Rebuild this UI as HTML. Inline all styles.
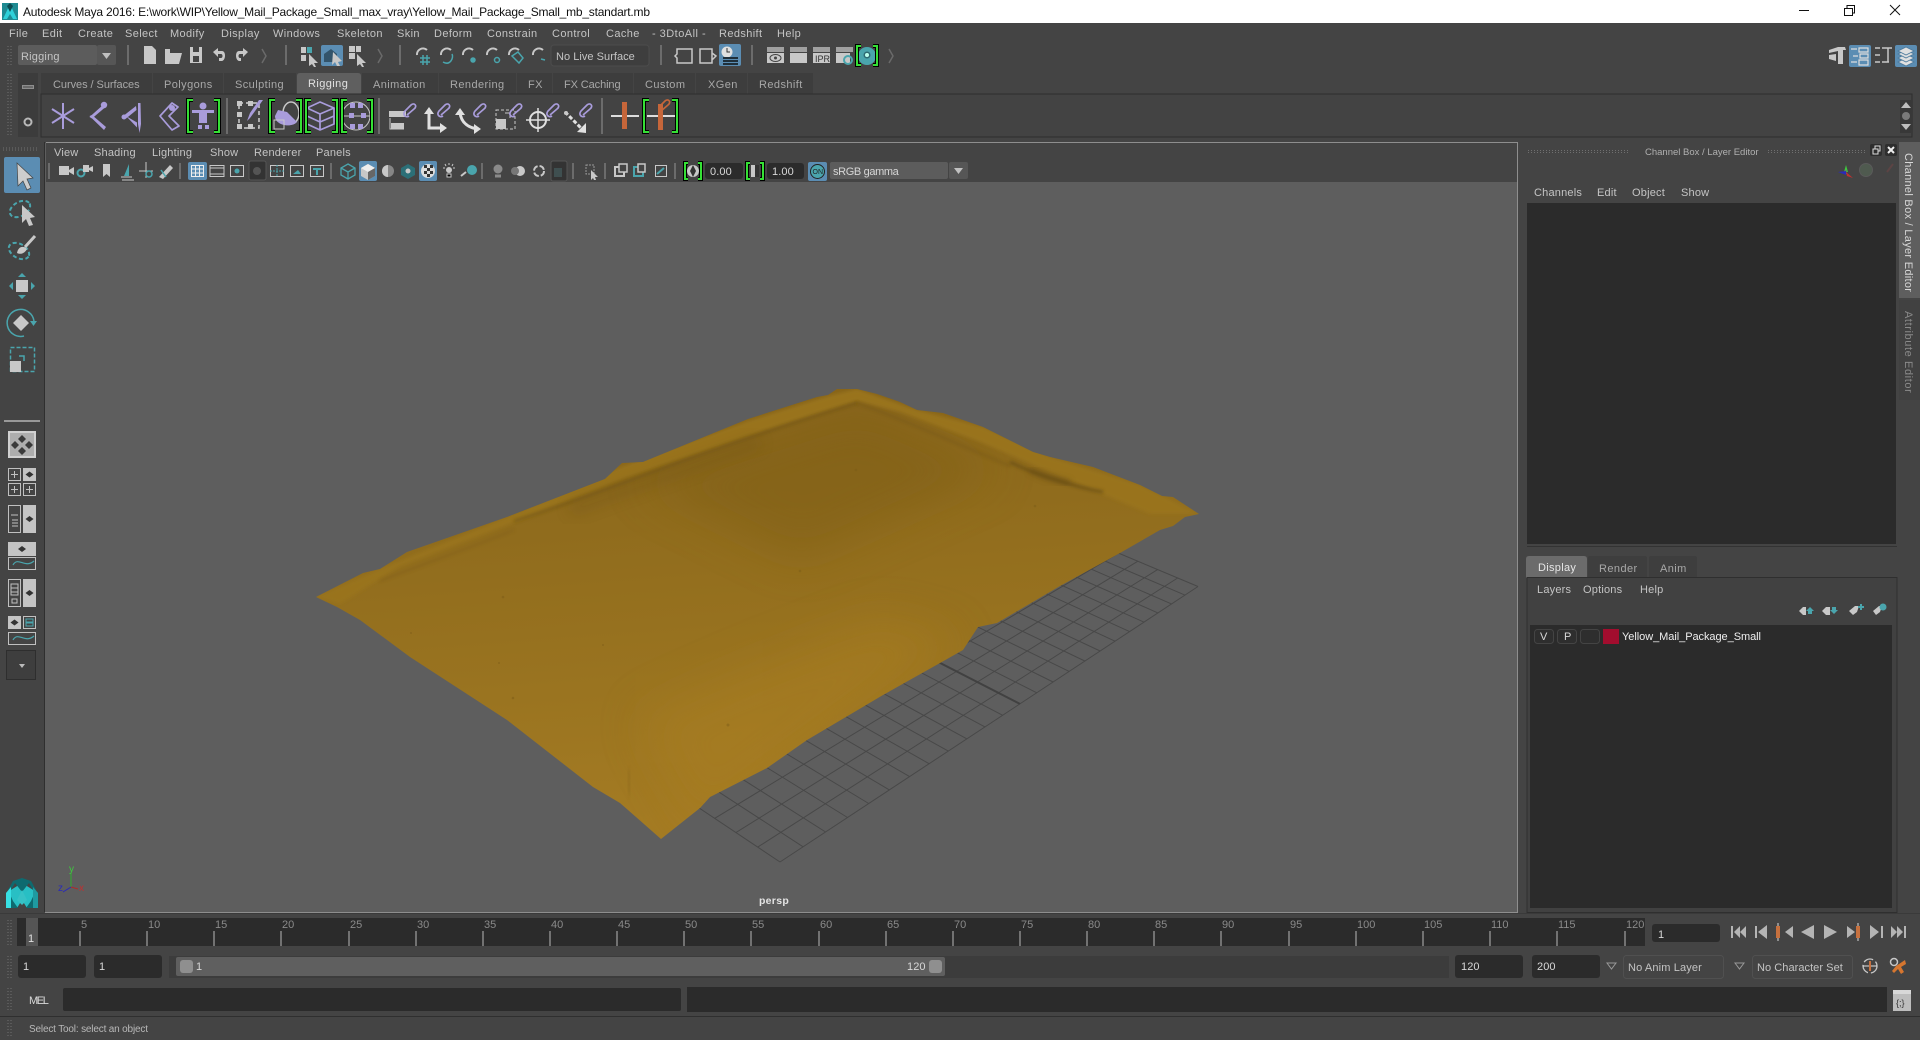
<!DOCTYPE html>
<html><head><meta charset="utf-8"><title>Autodesk Maya 2016</title>
<style>
html,body{margin:0;padding:0;background:#444;width:1920px;height:1040px;overflow:hidden}
svg{display:block;font-family:"Liberation Sans",sans-serif}
.m{font-size:11px;fill:#c4c4c4;letter-spacing:.2px}
.mm{font-size:11px;fill:#c4c4c4;letter-spacing:.38px}
.t{font-size:11px;fill:#a8a8a8;letter-spacing:.42px}
.l{font-size:11px;fill:#8a8a8a}
.w{font-size:11px;fill:#d8d8d8;letter-spacing:.1px}
.c{fill:#4aa5ad}
.g{fill:#c8c8c8}
.p{fill:#a99cdb}
.sp{fill:none;stroke:#a99cdb;stroke-width:2}
.sg{fill:none;stroke:#c8c8c8;stroke-width:2}
.sc{fill:none;stroke:#4aa5ad;stroke-width:2}
.sep{stroke:#6c6c6c;stroke-width:2}
.dots{stroke:#6f6f6f;stroke-width:1;stroke-dasharray:1 2;fill:none}
.bk{fill:none;stroke:#000;stroke-width:4}
.gb{fill:none;stroke:#35e035;stroke-width:2}
.a{fill:#5b8db3}
.in{fill:#2b2b2b}
</style></head><body>
<svg width="1920" height="1040" viewBox="0 0 1920 1040" xmlns="http://www.w3.org/2000/svg">
<defs>
<linearGradient id="pk" x1="0" y1="0" x2="0.15" y2="1"><stop offset="0" stop-color="#86631b"/><stop offset=".35" stop-color="#906c1d"/><stop offset=".7" stop-color="#9a7420"/><stop offset="1" stop-color="#a47b23"/></linearGradient>
<filter id="b1" x="-20%" y="-20%" width="140%" height="140%"><feGaussianBlur stdDeviation="1.500"/></filter>
<filter id="b3" x="-20%" y="-20%" width="140%" height="140%"><feGaussianBlur stdDeviation="3"/></filter>
<filter id="b6" x="-20%" y="-20%" width="140%" height="140%"><feGaussianBlur stdDeviation="7"/></filter>
<filter id="b20" x="-30%" y="-30%" width="160%" height="160%"><feGaussianBlur stdDeviation="22"/></filter>
<clipPath id="pc"><path d="M316 597L363 573L380 569L407 552L507 517L605 479L622 463L643 462L748 419L817 397L828 395L837 389L857 389L877 394L900 402L917 410L943 413L983 427L1033 452L1050 457L1093 467L1140 485L1162 496L1173 497L1199 514L1185 517L1173 526L1160 530L1120 553L1060 586L997 623L978 627L963 650L940 663L883 695L807 740L767 768L710 797L700 808L661 839L620 803L593 787L507 720L410 657L360 620L337 607Z"/></clipPath>
</defs>

<!-- base -->
<rect width="1920" height="1040" fill="#444"/>
<!-- title bar -->
<rect width="1920" height="23" fill="#fff"/>
<g transform="translate(2,3)"><rect width="16" height="17" fill="#1f8a92"/><path d="M1 16L8 1L15 16L11 16L8 11L5 16Z" fill="#2fd0d8"/><path d="M5 3L8 0L11 3L8 9Z" fill="#0d4a50"/></g>
<text x="23" y="16" font-size="12" fill="#111" textLength="627" lengthAdjust="spacing">Autodesk Maya 2016: E:\work\WIP\Yellow_Mail_Package_Small_max_vray\Yellow_Mail_Package_Small_mb_standart.mb</text>
<path d="M1799 10.5H1809" stroke="#111" stroke-width="1"/>
<path d="M1844.5 8.5H1852.5V15.5H1844.5ZM1847 8V5.5H1854.5V13H1852.5" fill="none" stroke="#111" stroke-width="1"/>
<path d="M1890 5L1900 15M1900 5L1890 15" stroke="#111" stroke-width="1"/>

<!-- menu -->
<g>
<text class="mm" x="9" y="37">File</text><text class="mm" x="42" y="37">Edit</text><text class="mm" x="78" y="37">Create</text><text class="mm" x="125" y="37">Select</text><text class="mm" x="170" y="37">Modify</text><text class="mm" x="221" y="37">Display</text><text class="mm" x="273" y="37">Windows</text><text class="mm" x="337" y="37">Skeleton</text><text class="mm" x="397" y="37">Skin</text><text class="mm" x="434" y="37">Deform</text><text class="mm" x="487" y="37">Constrain</text><text class="mm" x="552" y="37">Control</text><text class="mm" x="606" y="37">Cache</text><text class="mm" x="652" y="37" textLength="54">- 3DtoAll -</text><text class="mm" x="719" y="37">Redshift</text><text class="mm" x="777" y="37">Help</text>
</g>

<!-- status toolbar -->
<path class="dots" d="M8 46V66M11 46V66M8 74V136M11 74V136"/>
<rect x="18" y="45" width="79" height="20" rx="2" fill="#5c5c5c"/><rect x="97" y="45" width="19" height="20" rx="2" fill="#565656"/>
<path d="M102 53H111L106.500 59Z" fill="#c0c0c0"/>
<text class="m" x="21" y="60">Rigging</text>
<path class="sep" d="M128 45V65M286 45V65M400 45V65M661 45V65M752 45V65"/>
<!-- new open save undo redo -->
<path d="M144 46H152L156 50V64H144Z" class="g"/>
<path d="M165 51V64H179L182 53H170V49H165Z" class="g"/>
<path d="M190 47H202V63H190Z" class="g"/><rect x="193" y="47" width="6" height="5" fill="#444"/><rect x="193" y="56" width="6" height="6" fill="#444"/>
<path d="M213 52L218 48V51H222C226 51 226 60 222 61H219V58H221C223 58 223 54 221 54H218V57Z" class="g"/>
<path d="M248 52L243 48V51H239C235 51 235 60 239 61H241V58H240C238 58 238 54 240 54H243V57Z" class="g"/>
<path d="M262 49L266 56L262 63" fill="none" stroke="#6a6a6a" stroke-width="1.500"/>
<path d="M378 49L382 56L378 63" fill="none" stroke="#6a6a6a" stroke-width="1.500"/>
<path d="M889 49L893 56L889 63" fill="none" stroke="#6a6a6a" stroke-width="1.500"/>
<!-- selection mask -->
<rect x="321" y="45" width="22" height="21" rx="2" class="a"/>
<g class="g"><rect x="301" y="47" width="5" height="6"/><rect x="301" y="55" width="5" height="6"/><rect x="307" y="47" width="5" height="6" fill="#4aa5ad"/><path d="M309 54L318 63L314 63L316 67L314 67L312 64L309 66Z"/>
<path d="M324 54L331 49L337 54V62H324Z" fill="#33546b"/><path d="M333 52L342 61L338 62L340 66L337 66L335 62L332 65Z"/>
<rect x="349" y="46" width="6" height="6"/><rect x="356" y="46" width="5" height="6"/><rect x="349" y="53" width="6" height="6"/><path d="M357 54L366 63L362 63L364 67L362 67L360 64L357 66Z"/></g>
<!-- snaps -->
<g fill="none" stroke="#c8c8c8" stroke-width="2">
<path d="M417 55A6 6 0 0 1 427 50"/><path d="M441 55A6 6 0 0 1 451 50"/><path d="M463 55A6 6 0 0 1 473 50"/><path d="M487 55A6 6 0 0 1 497 50"/><path d="M509 55A6 6 0 0 1 519 50"/><path d="M533 55A6 6 0 0 1 543 50"/>
</g>
<g fill="none" stroke="#4aa5ad" stroke-width="1.500">
<path d="M420 58H430M420 62H430M423 55V65M427 55V65"/><path d="M443 62C450 66 454 58 452 54"/><circle cx="473" cy="60" r="2" fill="#4aa5ad"/><circle cx="497" cy="60" r="2.500"/><path d="M512 56L519 63L523 58L518 52Z"/><path d="M541 59L545 60"/>
</g>
<rect x="551" y="45" width="98" height="21" rx="3" fill="#3e3e3e" stroke="#4c4c4c"/>
<text class="m" x="556" y="60" textLength="79">No Live Surface</text>
<!-- live/construct -->
<path d="M677 49H692V63H677V58L675 56L677 54Z" fill="none" stroke="#c8c8c8" stroke-width="1.500"/>
<path d="M700 49H712V63H700Z M712 53L716 56L712 60" fill="none" stroke="#c8c8c8" stroke-width="1.500"/>
<rect x="719" y="44" width="22" height="22" rx="2" class="a"/>
<circle cx="727" cy="52" r="5.500" fill="#e0e0e0"/><path d="M727 48V52H730" stroke="#333" fill="none"/>
<path d="M723 58H738M723 61H738M723 64H738" stroke="#1f2f3a" stroke-width="2"/>
<!-- render -->
<g class="g"><rect x="767" y="47" width="17" height="5" opacity=".7"/><rect x="767" y="53" width="17" height="10"/><rect x="790" y="47" width="17" height="5" opacity=".7"/><rect x="790" y="53" width="17" height="10"/><rect x="813" y="47" width="17" height="5" opacity=".7"/><rect x="813" y="53" width="17" height="10"/><rect x="836" y="47" width="17" height="5" opacity=".7"/><rect x="836" y="53" width="14" height="10"/></g>
<ellipse cx="775.500" cy="58" rx="5.500" ry="3.500" fill="none" stroke="#444"/><circle cx="775.500" cy="58" r="1.500" fill="#444"/>
<text x="815" y="62" font-size="9" fill="#333">IPR</text>
<circle cx="848" cy="60" r="4" fill="none" stroke="#4aa5ad" stroke-width="2"/>
<circle cx="867" cy="56" r="9" class="c"/><circle cx="867" cy="55" r="3.500" fill="#2e6b72"/><circle cx="867" cy="55" r="2" fill="#bfe"/>
<path class="bk" d="M861 46H857V65H861M873 46H877V65H873"/><path class="gb" d="M861 46H857V65H861M873 46H877V65H873"/>

<!-- top-right mode icons -->
<g class="g"><path d="M1829 50L1838 47H1845L1846 50H1843V64H1838V51L1829 53ZM1829 55L1836 54V61L1829 59Z"/></g>
<rect x="1849" y="45" width="22" height="22" rx="2" class="a"/>
<g fill="none" stroke="#ddd" stroke-width="1.200"><path d="M1851 49H1857M1859 48H1868V52H1859ZM1853 56H1858M1860 54H1868V58H1860ZM1851 62H1857M1859 60H1868V65H1859Z"/></g>
<g fill="none" stroke="#c8c8c8" stroke-width="1.500"><path d="M1875 48H1880M1875 55H1880M1875 62H1880M1882 48H1892M1888 48V62M1882 62H1889"/></g>
<rect x="1895" y="45" width="22" height="22" rx="2" class="a"/>
<g fill="#e0e0e0" stroke="#4d7a9c" stroke-width=".8"><path d="M1906 58L1914 62L1906 66L1898 62Z"/><path d="M1906 54L1914 58L1906 62L1898 58Z"/><path d="M1906 50L1914 54L1906 58L1898 54Z"/><path d="M1906 47L1914 51L1906 55L1898 51Z"/></g>

<!-- tabs -->
<rect x="18" y="73" width="20" height="64" fill="#3c3c3c"/>
<rect x="22" y="85" width="12" height="4" fill="#b0b0b0" opacity=".7"/><path d="M23 87H33" stroke="#444" stroke-width="1"/>
<circle cx="28" cy="122" r="3.500" fill="none" stroke="#b8b8b8" stroke-width="2"/>
<g fill="#3d3d3d">
<rect x="41" y="73" width="111" height="21"/><rect x="153" y="73" width="70" height="21"/><rect x="224" y="73" width="72" height="21"/><rect x="362" y="73" width="76" height="21"/><rect x="439" y="73" width="77" height="21"/><rect x="517" y="73" width="35" height="21"/><rect x="553" y="73" width="80" height="21"/><rect x="634" y="73" width="61" height="21"/><rect x="696" y="73" width="51" height="21"/><rect x="748" y="73" width="65" height="21"/>
</g>
<path d="M297 94V76Q297 73 300 73H358Q361 73 361 76V94Z" fill="#5f5f5f"/>
<rect x="41" y="94" width="1871" height="43" fill="#434343" stroke="#2e2e2e"/>
<text class="t" x="53" y="88" textLength="87">Curves / Surfaces</text><text class="t" x="164" y="88">Polygons</text><text class="t" x="235" y="88">Sculpting</text><text class="t" x="308" y="87" style="fill:#e2e2e2">Rigging</text><text class="t" x="373" y="88">Animation</text><text class="t" x="450" y="88">Rendering</text><text class="t" x="528" y="88">FX</text><text class="t" x="564" y="88" textLength="57">FX Caching</text><text class="t" x="645" y="88">Custom</text><text class="t" x="708" y="88">XGen</text><text class="t" x="759" y="88">Redshift</text>

<!-- shelf icons -->
<g class="sp" style="stroke-width:2"><path d="M63 103V129M52 109L74 123M74 109L52 123"/></g>
<g class="p"><circle cx="104" cy="105" r="3.200"/><path d="M103 105L89.500 117L92 118.500L105 107.500Z"/><path d="M89.500 116L104 130L106 127L92 115Z"/></g>
<path class="p" d="M138 103H140.500L141 124L139.500 133L138 124Z"/><path class="p" d="M136 106L124.500 115L126 118.500L136.500 110Z"/><path class="p" d="M126 116L137 127.500L137 122.500Z"/><circle class="p" cx="124" cy="117" r="2.500"/>
<g fill="none" stroke="#a99cdb" stroke-width="1.700"><path d="M172 103L160 116L172 130L179 126L169 116L178 107Z" stroke-linejoin="round"/></g><circle class="p" cx="172" cy="108" r="3"/>
<!-- HIK -->
<g class="p"><circle cx="203" cy="106" r="3.500"/><path d="M192 110H214V113H207V123H199V113H192Z"/><rect x="198" y="125" width="4" height="4"/><rect x="205" y="125" width="4" height="4"/></g>
<path class="bk" d="M193 100H188V132H193M214 100H219V132H214"/><path class="gb" d="M193 100H188V132H193M214 100H219V132H214"/>
<!-- -->
<path class="sep" d="M227 98V134M379 98V134M602 98V134" stroke="#777"/>
<g fill="none" stroke="#cfcfcf" stroke-width="1.500" stroke-dasharray="4 3"><rect x="239" y="103" width="20" height="25"/></g><g class="g"><rect x="237" y="101" width="5" height="5"/><rect x="237" y="112" width="5" height="5"/><rect x="237" y="124" width="5" height="5"/><rect x="248" y="101" width="5" height="5"/><rect x="248" y="124" width="5" height="5"/></g><path d="M263 100L250 118L247 121L250 113L259 100Z" class="p"/>
<ellipse cx="291" cy="113" rx="8" ry="11" fill="none" stroke="#c8c8c8" stroke-width="1.500"/><path d="M275 116C275 126 292 128 297 122L287 112L278 110Z" class="p"/><rect x="274" y="120" width="10" height="9" fill="none" stroke="#c8c8c8"/>
<path class="bk" d="M275 100H270V132H275M296 100H301V132H296"/><path class="gb" d="M275 100H270V132H275M296 100H301V132H296"/>
<g fill="none" stroke="#a99cdb" stroke-width="1.700"><path d="M320 102L334 108V124L320 130L307 124V108ZM307 108L320 114L334 108M320 114V130M307 116L320 122L334 116"/></g>
<path class="bk" d="M311 100H306V132H311M332 100H337V132H332"/><path class="gb" d="M311 100H306V132H311M332 100H337V132H332"/>
<g fill="none" stroke="#c8c8c8" stroke-width="1"><circle cx="356" cy="116" r="14"/><path d="M342 116H370"/></g><g class="p"><rect x="350" y="103" width="5" height="5"/><rect x="358" y="103" width="5" height="5"/><rect x="349" y="113" width="5" height="5"/><rect x="361" y="113" width="5" height="5"/><rect x="350" y="124" width="5" height="5"/><rect x="358" y="124" width="5" height="5"/></g>
<path class="bk" d="M347 100H342V132H347M367 100H372V132H367"/><path class="gb" d="M347 100H342V132H347M367 100H372V132H367"/>
<!-- constraints -->
<g class="g"><rect x="389" y="111" width="17" height="6"/><rect x="391" y="123" width="13" height="6"/></g>
<path d="M390 118V129H404" fill="none" stroke="#c8c8c8"/>
<path d="M429 111V128H443" fill="none" stroke="#e0e0e0" stroke-width="3"/><path d="M429 107L424 114H434ZM447 128L440 123V133Z" fill="#e0e0e0"/>
<path d="M460 112C461 124 470 128 478 129" fill="none" stroke="#e0e0e0" stroke-width="3"/><path d="M460 108L455 115H465ZM481 129L474 124V134Z" fill="#e0e0e0"/>
<rect x="496" y="110" width="19" height="19" fill="none" stroke="#c8c8c8" stroke-dasharray="3 2"/><rect x="496" y="119" width="10" height="10" class="g"/><path d="M505 113H510V118" fill="none" stroke="#c8c8c8"/>
<circle cx="538" cy="120" r="8" fill="none" stroke="#e0e0e0" stroke-width="2"/><path d="M538 108V132M526 120H550" stroke="#e0e0e0" stroke-width="1.500"/>
<path d="M565 112L582 129" stroke="#e0e0e0" stroke-width="3" stroke-dasharray="4 2"/><path d="M577 132L586 123V133Z" fill="#e0e0e0"/><circle cx="566" cy="113" r="2" class="g"/>
<g fill="none" stroke="#a99cdb" stroke-width="1.700" transform="translate(0,7)">
<path d="M407 108L414 102C418 99 414 95 411 98L405 104C402 108 406 111 409 109"/>
<path d="M441 108L448 102C452 99 448 95 445 98L439 104C436 108 440 111 443 109"/>
<path d="M477 108L484 102C488 99 484 95 481 98L475 104C472 108 476 111 479 109"/>
<path d="M513 108L520 102C524 99 520 95 517 98L511 104C508 108 512 111 515 109"/>
<path d="M550 108L557 102C561 99 557 95 554 98L548 104C545 108 549 111 552 109"/>
<path d="M583 108L590 102C594 99 590 95 587 98L581 104C578 108 582 111 585 109"/>
</g>
<path d="M611 116H639" stroke="#ddd" stroke-width="2"/><rect x="622" y="102" width="5" height="27" fill="#c6663a"/>
<path d="M647 116H675" stroke="#ddd" stroke-width="2"/><rect x="658" y="104" width="5" height="26" fill="#c6663a"/>
<path d="M661 111L668 105C672 102 668 98 665 101L659 107" fill="none" stroke="#c6663a" stroke-width="1.700"/>
<path class="bk" d="M649 100H644V132H649M672 100H677V132H672"/><path class="gb" d="M649 100H644V132H649M672 100H677V132H672"/>
<rect x="1900" y="100" width="12" height="33" fill="#383838"/><path d="M1906 102L1911 108H1901ZM1906 130L1911 124H1901Z" fill="#bdbdbd"/><circle cx="1906" cy="116" r="4" fill="#7a7a7a"/>

<path d="M3 148H38" stroke="#6f6f6f" stroke-dasharray="1 2"/><path d="M3 150H38" stroke="#6f6f6f" stroke-dasharray="1 2"/>
<path d="M46 142.500H1517.500V912.500H45.500V142.500" fill="none" stroke="#8e8e8e"/>

<!-- viewport -->
<rect x="46" y="182" width="1471" height="730" fill="#5e5e5e"/>

<!-- grid -->
<g stroke="#454545" stroke-width="1" fill="none" opacity=".85">
<path d="M780 862L1198 586.500M757.700 847.100L1177.600 578M735.900 832.600L1157.600 569.600M714.600 818.400L1137.900 561.200M693.900 804.600L1118.600 553.100M673.600 791.100L1099.500 545.100M653.800 777.900L1080.800 537.300M634.500 764.900L1062.500 529.600"/>
<path d="M780 862L478.500 660.700M803.100 846.800L501.100 650.400M825.600 832L523.500 640.200M847.500 817.500L545.400 630.400M868.700 803.500L566.800 620.800M889.400 789.900L587.700 611.300M909.600 776.600L608.200 602.100M929.100 763.700L628.100 593.100M948.300 751.100L647.700 584.300M966.800 738.800L666.800 575.700M985 726.900L685.500 567.300M1002.700 715.300L703.800 559M1036.800 692.800L739.300 543M1053.100 682L756.400 535.200M1069.200 671.400L773.200 527.600M1084.800 661L789.800 520.200M1100.100 651L805.900 512.900M1115.100 641.200L821.800 505.800M1129.600 631.600L837.200 498.800M1143.900 622.100L852.500 491.900M1157.900 612.900L867.400 485.200M1171.500 603.900L882 478.600M1184.900 595.100L896.500 472.100M1198 586.500L910.500 465.800"/>
<path d="M1019.900 703.900L721.700 550.900" stroke="#3c3c3c" stroke-width="2"/>
</g>

<!-- package -->
<path d="M316 597L363 573L380 569L407 552L507 517L605 479L622 463L643 462L748 419L817 397L828 395L837 389L857 389L877 394L900 402L917 410L943 413L983 427L1033 452L1050 457L1093 467L1140 485L1162 496L1173 497L1199 514L1185 517L1173 526L1160 530L1120 553L1060 586L997 623L978 627L963 650L940 663L883 695L807 740L767 768L710 797L700 808L661 839L620 803L593 787L507 720L410 657L360 620L337 607Z" fill="url(#pk)"/>
<g clip-path="url(#pc)">
<path d="M640 720C720 680 800 650 880 620L960 640L700 830Z" fill="#a87e24" filter="url(#b20)" opacity=".55"/>
<path d="M640 480L860 410L1000 470L800 560Z" fill="#7f5e19" filter="url(#b20)" opacity=".5"/>
<path d="M316 597L380 569L507 517L622 467L748 421L828 396L857 389L917 410L983 427L1050 457L1140 485L1199 514L1150 514L1050 472L980 442L900 412L857 401L760 432L620 480L505 526L400 566L340 604Z" fill="#99731f" filter="url(#b1)"/>
<path d="M514 521C570 503 620 484 680 462C730 444 800 420 857 403" fill="none" stroke="#6e5216" stroke-width="2" filter="url(#b1)" opacity=".75"/>
<path d="M570 510C630 488 690 466 760 442" fill="none" stroke="#705317" stroke-width="10" filter="url(#b6)" opacity=".4"/>
<path d="M857 403C900 418 960 445 1010 466" fill="none" stroke="#705317" stroke-width="2" filter="url(#b1)" opacity=".45"/>
<path d="M1010 462C1030 472 1070 486 1103 492" fill="none" stroke="#654b13" stroke-width="3" filter="url(#b1)" opacity=".7"/>
<path d="M1030 470C1045 477 1055 480 1070 483" fill="none" stroke="#654b13" stroke-width="6" filter="url(#b3)" opacity=".5"/>
<path d="M380 581C420 565 470 548 514 530" fill="none" stroke="#79591a" stroke-width="2" filter="url(#b1)" opacity=".4"/>
<path d="M630 795L628 770" stroke="#7f5f1c" stroke-width="6" filter="url(#b3)" opacity=".25"/>
<g fill="#7a5a18" opacity=".45"><circle cx="503" cy="597" r="1.300"/><circle cx="499" cy="663" r="1"/><circle cx="513" cy="698" r="1.300"/><circle cx="728" cy="725" r="1.500"/><circle cx="800" cy="571" r="1.300"/><circle cx="856" cy="470" r="1.300"/><circle cx="1035" cy="506" r="1.300"/><circle cx="603" cy="645" r="1"/><circle cx="411" cy="633" r="1"/></g>
</g>

<!-- panel bar -->
<text class="m" x="54" y="156">View</text><text class="m" x="94" y="156">Shading</text><text class="m" x="152" y="156">Lighting</text><text class="m" x="210" y="156">Show</text><text class="m" x="254" y="156">Renderer</text><text class="m" x="316" y="156">Panels</text>
<path class="sep" d="M49 163V179M180 163V179M331 163V179M482 163V179M573 163V179M605 163V179M675 163V179"/>
<rect x="59" y="166" width="10" height="9" class="g"/><path d="M69 170L74 167V175L69 172Z" class="g"/>
<circle cx="81" cy="173" r="3.500" class="sc"/><path d="M83 165H89V172H83ZM89 168L93 166V172L89 170Z" class="g"/>
<path d="M103 164H110V177L106.500 174L103 177Z" class="g"/>
<path d="M124 176L129 164V176Z" class="c"/><path d="M121 177H132M122 180H134" stroke="#c8c8c8"/>
<path d="M146 162V178M139 171H153" stroke="#c8c8c8"/><circle cx="149" cy="174" r="3" class="sc" style="stroke-width:1.500"/>
<path d="M159 177L170 165L173 168L163 179Z" class="g"/><path d="M161 170L166 177" stroke="#4aa5ad" stroke-width="1.500"/>
<rect x="188" y="162" width="19" height="18" rx="2" class="a"/>
<path d="M191.500 165.500H203.500V176.500H191.500ZM191.500 169H203.500M191.500 173H203.500M195.500 165.500V176.500M199.500 165.500V176.500" fill="none" stroke="#eee"/>
<path d="M210 165.500H224V176.500H210ZM210 168H224M210 174H224" fill="none" stroke="#c8c8c8"/>
<rect x="230.500" y="165.500" width="13" height="11" fill="none" stroke="#c8c8c8"/><circle cx="237" cy="171" r="2.500" class="c"/>
<rect x="249" y="161" width="17" height="19" rx="2" fill="#333" stroke="#555"/><circle cx="257" cy="171" r="4" fill="#555"/>
<rect x="270.500" y="165.500" width="13" height="11" fill="none" stroke="#c8c8c8"/><path d="M277 165V177M270 171H284" stroke="#4aa5ad" stroke-dasharray="2 1"/>
<rect x="290.500" y="165.500" width="13" height="11" fill="none" stroke="#c8c8c8"/><path d="M293 174L298 170L301 174Z" class="c"/>
<rect x="310.500" y="165.500" width="13" height="11" fill="none" stroke="#c8c8c8"/><path d="M313 168H321V170H318V175H316V170H313Z" class="c"/>
<path d="M348 164L355 168V175L348 179L341 175V168ZM341 168L348 172L355 168M348 172V179" fill="none" stroke="#4aa5ad" stroke-width="1.300"/>
<rect x="359" y="161" width="18" height="20" rx="2" class="a"/><path d="M368 164L375 168V176L368 180L361 176V168Z" class="g"/><path d="M361 168L368 172L375 168L368 164Z" fill="#eee"/><path d="M368 172L375 168V176L368 180Z" fill="#666"/>
<circle cx="388" cy="171" r="6" class="g" style="opacity:.5"/><path d="M388 165A6 6 0 0 0 388 177Z" class="g"/>
<path d="M408 164L415 168V175L408 179L401 175V168Z" fill="#2c6f77"/><circle cx="408" cy="171" r="2.500" class="g"/>
<rect x="419" y="161" width="18" height="20" rx="2" class="a"/><circle cx="428" cy="171" r="7" fill="#ddd"/><path d="M424 165h3v3h-3zM430 165h3v3h-3zM427 168h3v3h-3zM424 171h3v3h-3zM430 171h3v3h-3zM427 174h3v3h-3z" fill="#333"/>
<circle cx="449" cy="170" r="3" class="g"/><path d="M449 163V165M443 168H445M453 168H455M445 164L446 166M453 164L452 166M447 174H451V177H447Z" stroke="#c8c8c8"/>
<circle cx="472" cy="170" r="5" class="c"/><path d="M461 176L466 172" stroke="#c8c8c8" stroke-width="2"/>
<circle cx="498" cy="169" r="4.500" fill="#8a8a8a"/><path d="M495 176L501 176" stroke="#8a8a8a" stroke-width="3"/>
<circle cx="520" cy="171" r="5" fill="#c8c8c8"/><circle cx="515" cy="171" r="4" fill="#777"/>
<circle cx="539" cy="171" r="5" fill="none" stroke="#c8c8c8" stroke-width="2" stroke-dasharray="6 2"/>
<rect x="551" y="161" width="16" height="20" rx="2" fill="#333" stroke="#555"/><rect x="554" y="168" width="8" height="9" fill="#3f4f50"/>
<rect x="586" y="165" width="8" height="9" fill="none" stroke="#999" stroke-dasharray="2 1"/><path d="M591 170L598 177L595 177L596 180L594 180L593 178L591 180Z" class="g"/>
<rect x="615" y="167" width="9" height="9" fill="none" stroke="#c8c8c8" stroke-width="2"/><rect x="619" y="164" width="8" height="8" fill="#444" stroke="#c8c8c8" stroke-width="1.500"/>
<rect x="634" y="167" width="9" height="9" fill="none" stroke="#4aa5ad" stroke-width="2"/><rect x="638" y="164" width="7" height="8" fill="#444" stroke="#c8c8c8" stroke-width="1.500"/>
<rect x="655.500" y="165.500" width="11" height="11" fill="none" stroke="#c8c8c8"/><path d="M657 174L664 168" stroke="#4aa5ad" stroke-width="2"/>
<circle cx="693" cy="171" r="6" class="g"/><path d="M693 165L696 171L693 177L690 171Z" fill="#333"/>
<path class="bk" d="M688 163H685V179H688M698 163H701V179H698"/><path class="gb" d="M688 163H685V179H688M698 163H701V179H698"/>
<rect x="705" y="163" width="38" height="16" rx="3" class="in"/><text class="w" x="710" y="175">0.00</text>
<rect x="751" y="165" width="8" height="12" class="g"/><rect x="755" y="165" width="4" height="12" fill="#333"/>
<path class="bk" d="M750 163H747V179H750M760 163H763V179H760"/><path class="gb" d="M750 163H747V179H750M760 163H763V179H760"/>
<rect x="767" y="163" width="37" height="16" rx="3" class="in"/><text class="w" x="772" y="175">1.00</text>
<rect x="808" y="162" width="19" height="19" rx="2" class="a"/><circle cx="817.500" cy="171.500" r="7" class="c" stroke="#222" stroke-width="1"/><text x="812.500" y="174" font-size="7" fill="#222">ON</text>
<rect x="830" y="162" width="118" height="17" rx="2" fill="#5c5c5c"/><rect x="949" y="162" width="19" height="17" rx="2" fill="#565656"/><path d="M954 168H963L958.500 174Z" fill="#c0c0c0"/>
<text class="m" x="833" y="175" textLength="66" style="fill:#d6d6d6">sRGB gamma</text>

<!-- left toolbar -->
<rect x="44" y="142" width="1.500" height="770" fill="#2f2f2f"/>
<rect x="4" y="157" width="36" height="36" rx="2" class="a"/>
<path d="M17 163L33 178L27 179L31 188L27 190L23 181L18 186Z" fill="#cdcdcd" stroke="#444" stroke-width=".7"/>
<ellipse cx="20" cy="209" rx="11" ry="7" transform="rotate(-30 20 209)" fill="none" stroke="#4aa5ad" stroke-width="2" stroke-dasharray="4 2.500"/>
<path d="M22 205L35 217L30 218L33 225L29 226L26 219L22 223Z" class="g"/>
<ellipse cx="19" cy="251" rx="11" ry="7" transform="rotate(30 19 251)" fill="none" stroke="#4aa5ad" stroke-width="2" stroke-dasharray="4 2.500"/>
<path d="M35 236L25 247" stroke="#c8c8c8" stroke-width="3"/><path d="M17 253C18 247 23 245 27 249C25 253 21 255 17 253Z" class="g"/>
<rect x="16" y="280" width="12" height="12" class="g"/>
<path class="c" d="M22 273L26 277H18ZM22 299L26 295H18ZM9 286L13 282V290ZM35 286L31 282V290Z"/>
<path d="M21 315L29 323L21 331L13 323Z" class="g"/>
<path d="M24 336A13.500 13.500 0 1 1 34 321" fill="none" stroke="#4aa5ad" stroke-width="1.500"/><path d="M30 321H37L33.500 326Z" class="c"/>
<rect x="10.500" y="347.500" width="24" height="24" fill="none" stroke="#4aa5ad" stroke-width="1.500" stroke-dasharray="4 2"/><rect x="10" y="361" width="11" height="11" class="g"/><path d="M19 356H24V361" fill="none" stroke="#4aa5ad" stroke-width="1.500"/>
<path d="M4 421H40" stroke="#999" stroke-width="2"/>
<rect x="9" y="432" width="26" height="25" fill="#adadad" stroke="#d0d0d0" stroke-width="2"/>
<g fill="#3a3a3a"><path d="M22 435L26 439L22 443L18 439Z"/><path d="M15 441L19 445L15 449L11 445Z"/><path d="M29 441L33 445L29 449L25 445Z"/><path d="M22 447L26 451L22 455L18 451Z"/></g>

<g fill="none" stroke="#c0c0c0" stroke-width="1">
<rect x="8.500" y="468.500" width="12" height="12"/><rect x="8.500" y="483.500" width="12" height="12"/><rect x="23.500" y="483.500" width="12" height="12"/><path d="M11 474.500H18M14.500 471V478M11 489.500H18M14.500 486V493M26 489.500H33M29.500 486V493"/>
<rect x="8.500" y="505.500" width="12" height="27"/><path d="M11 515H18M12 520H18M12 523H18M12 526H18"/>
<rect x="8.500" y="557.500" width="27" height="12"/>
<rect x="8.500" y="579.500" width="12" height="27"/><path d="M11 584H18V595H11ZM11 588H18M11 592H18M12 599H17V603H12Z"/>
<rect x="23.500" y="616.500" width="12" height="12"/><rect x="8.500" y="632.500" width="27" height="12"/>
</g>
<g fill="#c4c4c4"><rect x="23" y="468" width="13" height="13"/><rect x="23" y="505" width="13" height="28"/><rect x="8" y="542" width="28" height="14"/><rect x="23" y="579" width="13" height="28"/><rect x="8" y="616" width="13" height="13"/></g>
<g fill="#333"><path d="M29.500 471.500L33.500 474.500L29.500 477.500L25.500 474.500Z"/><path d="M29.500 516L33.500 519L29.500 522L25.500 519Z"/><path d="M22 546L26 549L22 552L18 549Z"/><path d="M29.500 590L33.500 593L29.500 596L25.500 593Z"/><path d="M14.500 619.500L18.500 622.500L14.500 625.500L10.500 622.500Z"/></g>
<path d="M13 565C18 556 25 569 34 561" fill="none" stroke="#4aa5ad" stroke-width="1.200"/><path d="M13 640C18 631 25 644 34 636" fill="none" stroke="#4aa5ad" stroke-width="1.200"/><path d="M26 619H33V622H26ZM26 623H33V626H26Z" fill="none" stroke="#4aa5ad"/>
<rect x="6.500" y="650.500" width="29" height="29" fill="#3e3e3e" stroke="#2e2e2e"/><path d="M19 664H25L22 668Z" fill="#bbb"/>

<!-- logo -->
<path d="M22 883L38 893V908H27L22 900L17 908H6V893Z" fill="#28bfc4"/>
<path d="M13 881L22 878L31 881L36 890L31 901L26 908H33V890L29 883L22 892L15 883L11 890V908H18L13 901L8 890Z" fill="#0e6a6f"/>
<path d="M6 893L11 887V908H6Z" fill="#38e0e4"/><path d="M38 893L33 887V908H38Z" fill="#1f9aa0"/><path d="M22 890L27 900L22 905L17 900Z" fill="#36c2c6"/>

<!-- axes -->
<path d="M71 887V873" stroke="#2fae2f" stroke-width="1"/><path d="M71 887L63 892" stroke="#2a2ab8" stroke-width="1"/><path d="M71 887L78 889" stroke="#b02a2a" stroke-width="1"/>
<text x="69" y="872" font-size="10" fill="#3fc83f">y</text><text x="58" y="891" font-size="10" fill="#2a2ab8">z</text><text x="79" y="891" font-size="10" fill="#c03030">x</text>
<text x="774" y="904" font-size="10.500" font-weight="bold" fill="#e4e4e4" text-anchor="middle" letter-spacing=".3">persp</text>

<!-- channel box -->
<path d="M1528 150.500H1628M1528 152.500H1628M1768 150.500H1865M1768 152.500H1865" stroke="#6f6f6f" stroke-dasharray="1 2"/>
<text x="1645" y="155" font-size="9.500" fill="#b0b0b0">Channel Box / Layer Editor</text>
<rect x="1870" y="144" width="12" height="12" rx="2" fill="#2e2e2e"/><path d="M1873 149H1878V154H1873ZM1875 149V146H1880V151H1878" fill="none" stroke="#ddd"/>
<rect x="1885" y="144" width="12" height="12" rx="2" fill="#2e2e2e"/><path d="M1888 147L1894 153M1894 147L1888 153" stroke="#eee" stroke-width="2"/>
<path d="M1846 165L1848 172H1844Z" fill="#3fc83f"/><path d="M1846 170V174" stroke="#666"/><path d="M1838 172L1846 171V175Z" fill="#2a2ab8"/><path d="M1846 172L1853 178L1847 176Z" fill="#c03030"/>
<circle cx="1866" cy="170" r="6.500" fill="#4f5a4f" stroke="#5a5a5a"/><path d="M1887 172L1893 164" stroke="#5c4444" stroke-width="2"/>
<text class="m" x="1534" y="196">Channels</text><text class="m" x="1597" y="196">Edit</text><text class="m" x="1632" y="196">Object</text><text class="m" x="1681" y="196">Show</text>
<rect x="1527" y="203" width="369" height="341" fill="#2b2b2b"/>
<path d="M1527 546.500H1897" stroke="#333"/>
<path d="M1899 298V142H1920V298Z" fill="#5e5e5e"/><path d="M1899 400V300H1920V400Z" fill="#414141"/>
<text transform="translate(1905,153) rotate(90)" font-size="11" fill="#d8d8d8" letter-spacing=".3">Channel Box / Layer Editor</text>
<text transform="translate(1905,311) rotate(90)" font-size="11" fill="#8a8a8a" letter-spacing=".6">Attribute Editor</text>

<path d="M1526 578V559Q1526 556 1529 556H1584Q1587 556 1587 559V577Z" fill="#6b6b6b"/>
<path d="M1588 577V558Q1588 556 1590 556H1645Q1647 556 1647 558V577ZM1649 577V558Q1649 556 1651 556H1695Q1697 556 1697 558V577Z" fill="#3e3e3e"/>
<rect x="1527" y="577.500" width="370" height="335" fill="#414141" stroke="#2f2f2f"/>
<text class="w" x="1538" y="571" style="fill:#e6e6e6;letter-spacing:.3px">Display</text><text class="t" x="1599" y="572">Render</text><text class="t" x="1660" y="572">Anim</text>
<text class="m" x="1537" y="593">Layers</text><text class="m" x="1583" y="593">Options</text><text class="m" x="1640" y="593">Help</text>
<g fill="#c8c8c8"><path d="M1799 611L1803 607H1806V615H1803Z"/><path d="M1822 611L1826 607H1830V615H1826Z"/><path d="M1849 611L1855 606H1859L1857 612L1853 615Z"/><path d="M1873 611L1879 606H1882L1880 612L1876 615Z"/></g>
<g fill="#4aa5ad"><path d="M1810 607L1814 611H1812V614H1808V611H1806Z"/><path d="M1834 614L1838 610H1836V607H1832V610H1830Z"/><path d="M1860 604H1862V606H1864V608H1862V610H1860V608H1858V606H1860Z"/><circle cx="1883" cy="607" r="3.500"/></g>
<rect x="1530" y="625" width="362" height="283" fill="#2b2b2b"/>
<rect x="1534.500" y="629.500" width="19" height="14" rx="3" fill="#2e2e2e" stroke="#444"/><rect x="1557.500" y="629.500" width="19" height="14" rx="3" fill="#2e2e2e" stroke="#444"/><rect x="1580.500" y="629.500" width="19" height="14" rx="3" fill="#2e2e2e" stroke="#444"/>
<rect x="1603" y="629" width="16" height="15" fill="#a20d2e"/>
<text class="w" x="1540" y="640">V</text><text class="w" x="1564" y="640">P</text>
<text x="1622" y="640" font-size="11" fill="#eee" textLength="139">Yellow_Mail_Package_Small</text>

<!-- timeline -->
<rect x="0" y="913" width="1920" height="127" fill="#444"/>
<path d="M1526.500 912V900M0 913.500H1920" stroke="#3a3a3a"/>
<path class="dots" d="M8 920V946M11 920V946M8 956V978M11 956V978M8 988V1010M11 988V1010M8 1020V1036M11 1020V1036"/>
<rect x="17" y="918" width="1628" height="28" fill="#2b2b2b"/>
<rect x="26" y="918" width="12" height="28" fill="#555"/>
<text x="28" y="942" font-size="11" fill="#e0e0e0">1</text>
<path d="M80 931V946M147 931V946M214 931V946M281 931V946M349 931V946M416 931V946M483 931V946M550 931V946M617 931V946M684 931V946M751 931V946M819 931V946M886 931V946M953 931V946M1020 931V946M1087 931V946M1154 931V946M1221 931V946M1289 931V946M1356 931V946M1423 931V946M1490 931V946M1557 931V946M1625 931V946" stroke="#8a8a8a" stroke-width="1.500"/>
<g>
<text class="l" x="81" y="928">5</text><text class="l" x="148" y="928">10</text><text class="l" x="215" y="928">15</text><text class="l" x="282" y="928">20</text><text class="l" x="350" y="928">25</text><text class="l" x="417" y="928">30</text><text class="l" x="484" y="928">35</text><text class="l" x="551" y="928">40</text><text class="l" x="618" y="928">45</text><text class="l" x="685" y="928">50</text><text class="l" x="752" y="928">55</text><text class="l" x="820" y="928">60</text><text class="l" x="887" y="928">65</text><text class="l" x="954" y="928">70</text><text class="l" x="1021" y="928">75</text><text class="l" x="1088" y="928">80</text><text class="l" x="1155" y="928">85</text><text class="l" x="1222" y="928">90</text><text class="l" x="1290" y="928">95</text><text class="l" x="1357" y="928">100</text><text class="l" x="1424" y="928">105</text><text class="l" x="1491" y="928">110</text><text class="l" x="1558" y="928">115</text><text class="l" x="1626" y="928">120</text>
</g>
<rect x="1652" y="924" width="68" height="18" rx="3" class="in"/><text class="w" x="1658" y="938">1</text>
<g class="g" opacity=".85"><path d="M1731 926V938H1733V926ZM1734 932L1740 926V938ZM1740 932L1746 926V938Z"/>
<path d="M1755 926V938H1757V926ZM1758 932L1767 925V939Z"/>
<path d="M1785 932L1793 926V938Z"/>
<path d="M1801 932L1814 925V939Z"/><path d="M1824 925L1837 932L1824 939Z"/><path d="M1847 926L1855 932L1847 938Z"/>
<path d="M1870 925L1879 932L1870 939ZM1881 926V938H1883V926Z"/><path d="M1891 926L1897 932L1891 938ZM1897 926L1903 932L1897 938ZM1904 926V938H1906V926Z"/></g>
<path d="M1778 923V941M1858 923V941" stroke="#d8d8d8"/><rect x="1776" y="926" width="4" height="12" fill="#c6703e"/><rect x="1856" y="926" width="4" height="12" fill="#c6703e"/>

<rect x="18" y="955" width="68" height="23" rx="3" class="in"/><rect x="94" y="955" width="68" height="23" rx="3" class="in"/>
<text class="w" x="23" y="970">1</text><text class="w" x="99" y="970">1</text>
<rect x="169" y="956" width="1280" height="22" fill="#3c3c3c"/>
<rect x="176" y="957" width="769" height="19" rx="2" fill="#5f5f5f"/>
<rect x="180" y="960" width="13" height="13" rx="3" fill="#8f8f8f"/><rect x="929" y="960" width="13" height="13" rx="3" fill="#8f8f8f"/>
<text class="w" x="196" y="970">1</text><text class="w" x="907" y="970">120</text>
<rect x="1455" y="955" width="68" height="23" rx="3" class="in"/><rect x="1532" y="955" width="68" height="23" rx="3" class="in"/>
<text class="w" x="1461" y="970">120</text><text class="w" x="1537" y="970">200</text>
<path d="M1607 963H1616L1611.500 969Z" fill="none" stroke="#999"/><path d="M1735 963H1744L1739.500 969Z" fill="none" stroke="#999"/>
<rect x="1623.500" y="955.500" width="100" height="23" rx="3" fill="none" stroke="#505050"/><rect x="1752.500" y="955.500" width="100" height="23" rx="3" fill="none" stroke="#505050"/>
<text class="m" x="1628" y="971" textLength="74">No Anim Layer</text><text class="m" x="1757" y="971" textLength="86">No Character Set</text>
<circle cx="1870" cy="966" r="7" fill="none" stroke="#c8c8c8" stroke-width="1.300" stroke-dasharray="10 3"/><path d="M1863 966H1877" stroke="#e0e0e0"/><rect x="1869" y="961" width="2" height="10" fill="#c6703e"/>
<circle cx="1894" cy="962" r="3.500" fill="none" stroke="#c8c8c8" stroke-width="1.500"/><path d="M1899 964L1905 960L1906 964L1901 967L1904 972L1901 974L1898 969L1894 973L1892 971L1896 966Z" fill="#d6762f"/>

<!-- command -->
<text class="w" x="29" y="1004" textLength="20">MEL</text>
<rect x="63" y="988" width="618" height="23" rx="2" class="in"/><rect x="687" y="987" width="1200" height="25" class="in"/>
<rect x="1893" y="990" width="18" height="21" fill="#bdbdbd"/><rect x="1893" y="990" width="18" height="4" fill="#d8d8d8"/><text x="1896" y="1006" font-size="9" fill="#333">{;}</text>
<path d="M0 1016.500H1920" stroke="#2f2f2f"/>
<text x="29" y="1032" font-size="10" fill="#b8b8b8" textLength="119">Select Tool: select an object</text>
</svg>
</body></html>
